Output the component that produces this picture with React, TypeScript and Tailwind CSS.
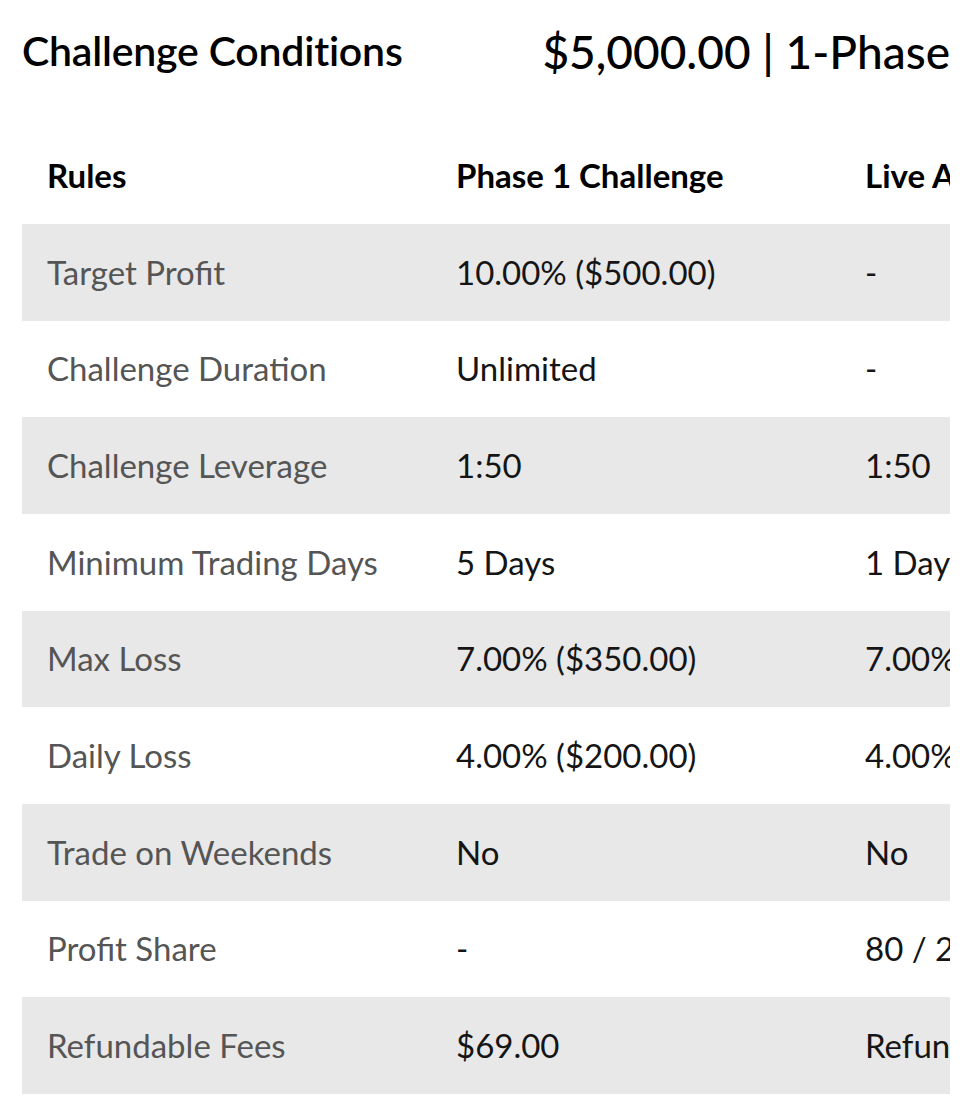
import React from "react";

type Row = { rule: string; phase: string; live: string };

const rows: Row[] = [
  { rule: "Target Profit", phase: "10.00% ($500.00)", live: "-" },
  { rule: "Challenge Duration", phase: "Unlimited", live: "-" },
  { rule: "Challenge Leverage", phase: "1:50", live: "1:50" },
  { rule: "Minimum Trading Days", phase: "5 Days", live: "1 Days" },
  { rule: "Max Loss", phase: "7.00% ($350.00)", live: "7.00% ($350.00)" },
  { rule: "Daily Loss", phase: "4.00% ($200.00)", live: "4.00% ($200.00)" },
  { rule: "Trade on Weekends", phase: "No", live: "No" },
  { rule: "Profit Share", phase: "-", live: "80 / 20" },
  { rule: "Refundable Fees", phase: "$69.00", live: "Refundable" },
];

const App = () => {
  return (
    <div
      className="w-[972px] h-[1109px] bg-white px-[22px] overflow-hidden"
      style={{ fontFamily: "Lato, 'Noto Sans', sans-serif" }}
    >
      <div className="h-[104px] flex items-center justify-between pb-[2px]">
        <h2 className="text-[41px] font-semibold text-black tracking-[-0.2px]">
          Challenge Conditions
        </h2>
        <div className="text-[46px] font-medium text-black whitespace-nowrap">
          $5,000.00 | 1-Phase
        </div>
      </div>

      <div className="mt-[24px] w-[928px] overflow-hidden">
        <table className="w-[1227px] table-fixed text-left text-[33px]">
          <thead>
            <tr className="h-[96px]">
              <th className="w-[409px] pl-[25px] font-bold text-black">Rules</th>
              <th className="w-[409px] pl-[25px] font-bold text-black">
                Phase 1 Challenge
              </th>
              <th className="w-[409px] pl-[25px] font-bold text-black">
                Live Account
              </th>
            </tr>
          </thead>
          <tbody>
            {rows.map((r, i) => (
              <tr
                key={r.rule}
                className={i % 2 === 0 ? "h-[96.67px] bg-[#e8e8e8]" : "h-[96.67px] bg-white"}
              >
                <td className="pl-[25px] text-[#555555] whitespace-nowrap">{r.rule}</td>
                <td className="pl-[25px] text-[#151515] whitespace-nowrap">{r.phase}</td>
                <td className="pl-[25px] text-[#151515] whitespace-nowrap">{r.live}</td>
              </tr>
            ))}
          </tbody>
        </table>
      </div>
    </div>
  );
};

export default App;
